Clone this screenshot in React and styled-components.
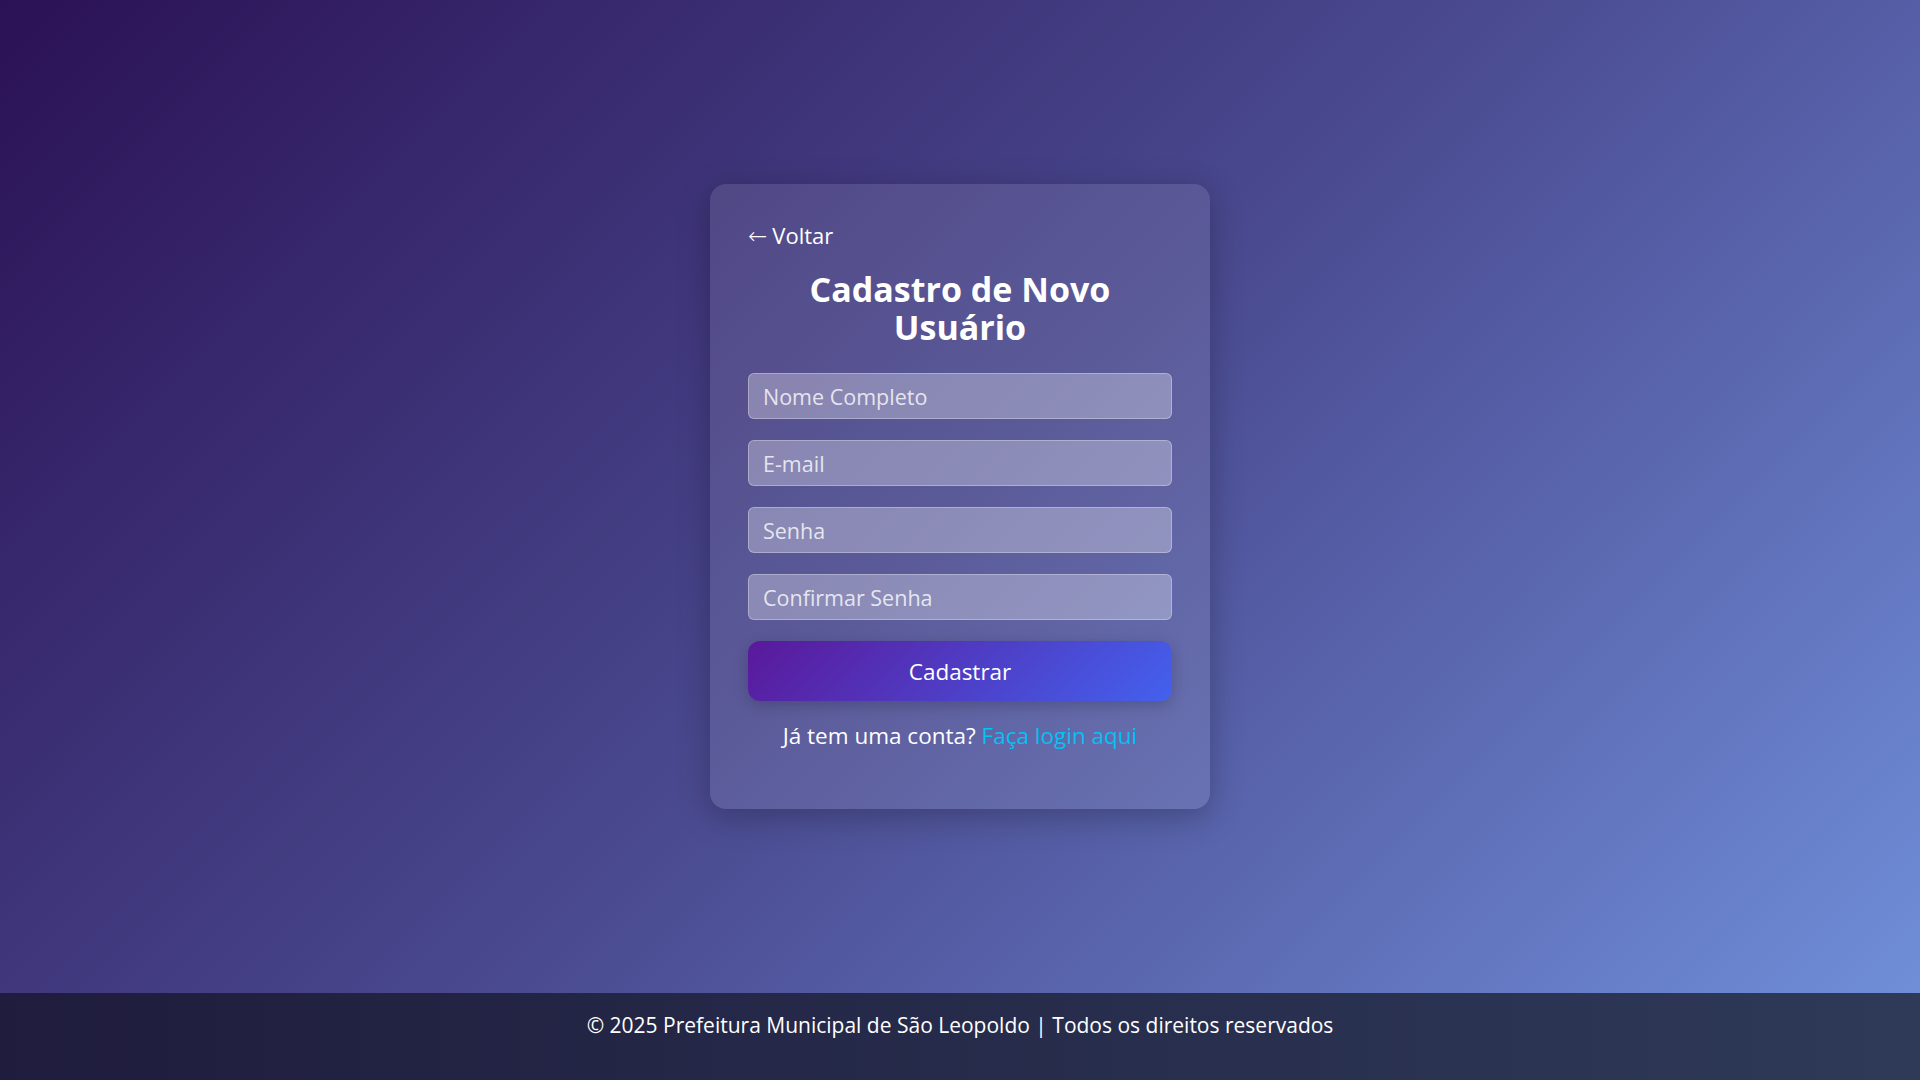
import React from "react";
import styled, { createGlobalStyle } from "styled-components";

const GlobalStyle = createGlobalStyle`
  * {
    box-sizing: border-box;
  }
  body {
    margin: 0;
    font-family: "Open Sans", "DejaVu Sans", sans-serif;
    color: #fff;
  }
`;

const Page = styled.div`
  min-height: 100vh;
  display: flex;
  flex-direction: column;
  background: linear-gradient(135deg, #2b1155 0%, #4a4a90 50%, #7292dd 100%);
`;

const Main = styled.main`
  flex: 1;
  display: flex;
  align-items: center;
  justify-content: center;
`;

const Card = styled.div`
  width: 500px;
  padding: 36px 38px 58px;
  border-radius: 16px;
  background: rgba(255, 255, 255, 0.1);
  box-shadow: 0 8px 32px rgba(0, 0, 0, 0.25);
  display: flex;
  flex-direction: column;
`;

const BackLink = styled.a`
  align-self: flex-start;
  font-size: 22px;
  line-height: 30px;
  color: #fff;
  text-decoration: none;
  cursor: pointer;
`;

const Arrow = styled.span`
  font-family: "DejaVu Sans", sans-serif;
  font-size: 23px;
  font-weight: 300;
  margin-right: 5px;
`;

const Title = styled.h1`
  margin: 19px 0 27px;
  font-size: 34px;
  font-weight: 700;
  line-height: 38px;
  text-align: center;
  padding: 0 40px;
`;

const Form = styled.form`
  display: flex;
  flex-direction: column;
  gap: 21px;
`;

const Input = styled.input`
  height: 46px;
  width: 100%;
  padding: 0 14px;
  border: 1px solid rgba(255, 255, 255, 0.3);
  border-radius: 6px;
  background: rgba(255, 255, 255, 0.3);
  color: #fff;
  font-family: inherit;
  font-size: 21.5px;
  outline: none;

  &::placeholder {
    color: rgba(255, 255, 255, 0.8);
  }
`;

const Button = styled.button`
  height: 60px;
  border: none;
  border-radius: 12px;
  background: linear-gradient(135deg, #5a189a 0%, #4361ee 100%);
  box-shadow: 0 4px 15px rgba(0, 0, 0, 0.2);
  color: #fff;
  font-family: inherit;
  font-size: 22.5px;
  cursor: pointer;
`;

const Note = styled.p`
  margin: 19px 0 0;
  text-align: center;
  font-size: 22.5px;
`;

const LoginLink = styled.a`
  color: #00c3f5;
  text-decoration: none;
  cursor: pointer;
`;

const Footer = styled.footer`
  height: 87px;
  display: flex;
  justify-content: center;
  padding-top: 18px;
  background: linear-gradient(90deg, #1f1c3d 0%, #2e3a58 100%);
  font-size: 21px;
  color: #fff;
`;

export default function App() {
  return (
    <Page>
      <GlobalStyle />
      <Main>
        <Card>
          <BackLink>
            <Arrow>←</Arrow>Voltar
          </BackLink>
          <Title>Cadastro de Novo Usuário</Title>
          <Form onSubmit={e => e.preventDefault()}>
            <Input type="text" placeholder="Nome Completo" />
            <Input type="email" placeholder="E-mail" />
            <Input type="password" placeholder="Senha" />
            <Input type="password" placeholder="Confirmar Senha" />
            <Button type="submit">Cadastrar</Button>
          </Form>
          <Note>
            Já tem uma conta? <LoginLink>Faça login aqui</LoginLink>
          </Note>
        </Card>
      </Main>
      <Footer>
        © 2025 Prefeitura Municipal de São Leopoldo | Todos os direitos
        reservados
      </Footer>
    </Page>
  );
}
